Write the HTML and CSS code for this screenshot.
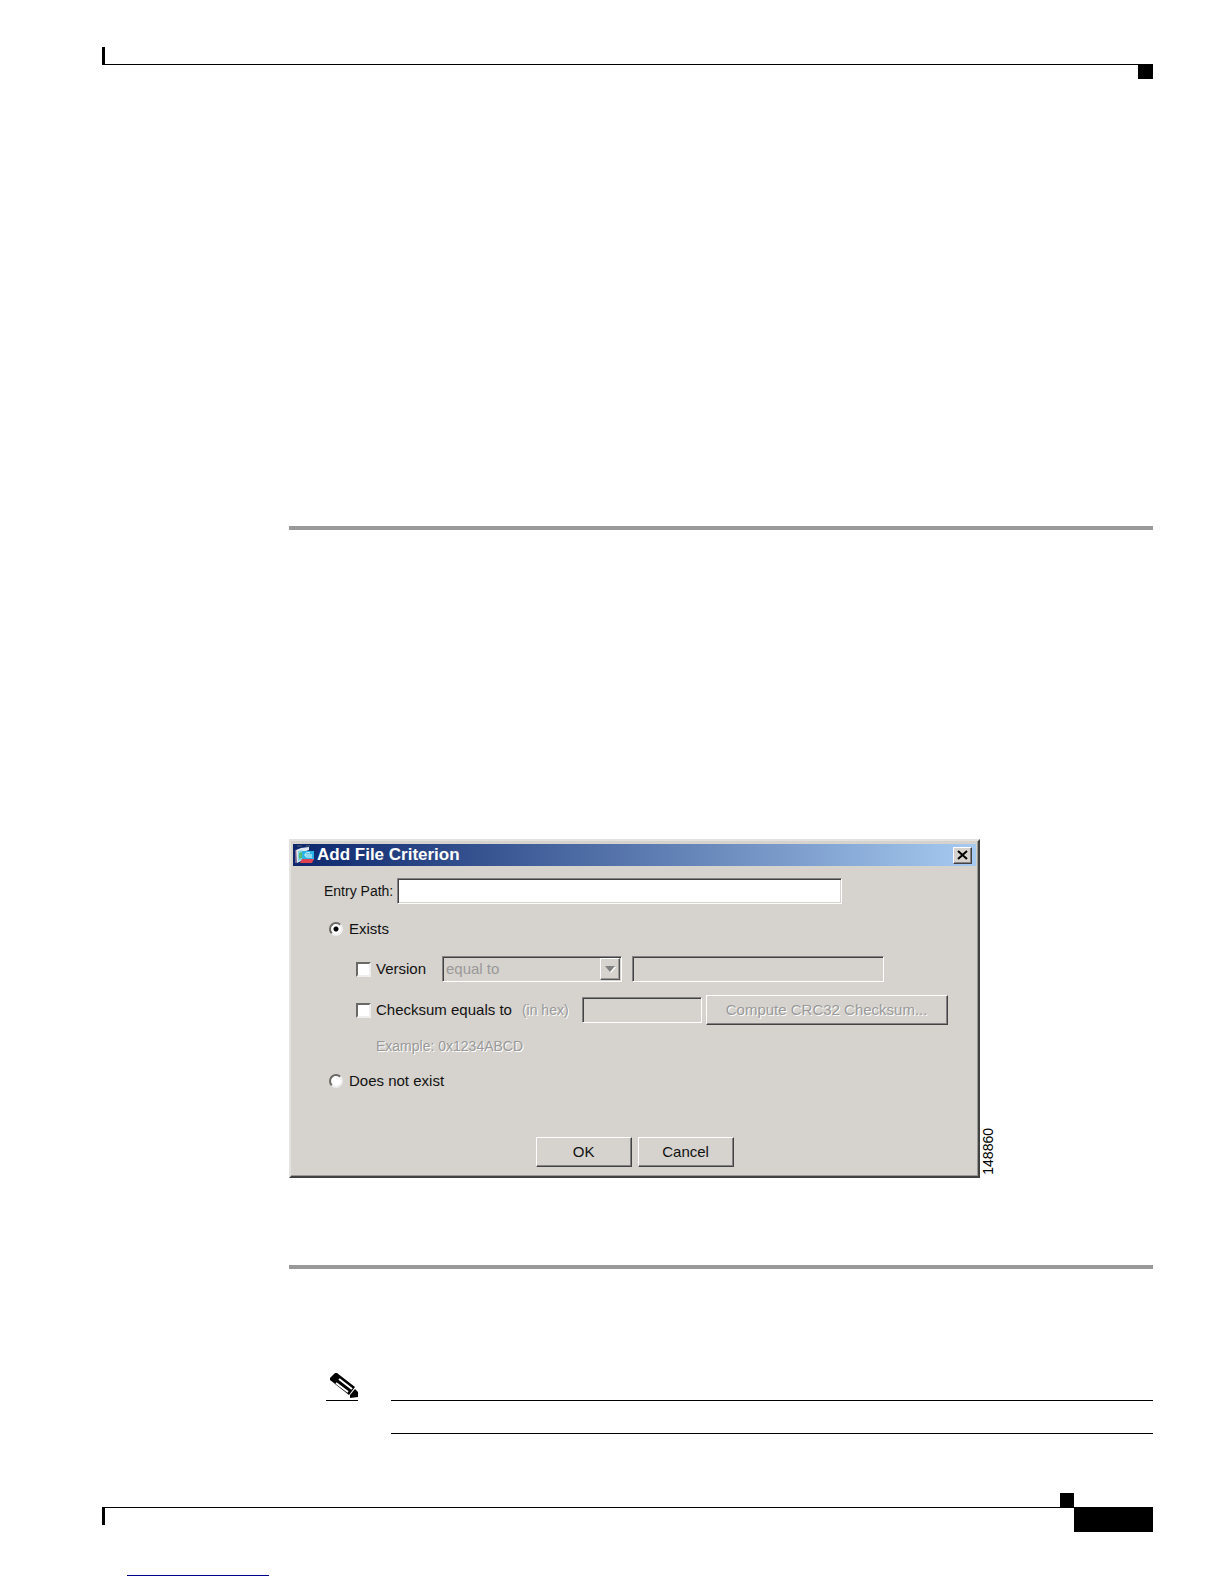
FILE: index.html
```
<!DOCTYPE html>
<html lang="en">
<head>
    <meta charset="UTF-8">
    <meta name="viewport" content="width=device-width, initial-scale=1.0">
    <title>Add File Criterion</title>
    <link rel="stylesheet" href="styles.css">
</head>
<body>
    <div class="page">
        <header class="page-header">
            <div class="header-line"></div>
            <div class="header-square"></div>
        </header>

        <main class="content">
            <hr class="rule">
            <div class="figure">
                <form class="dialog">
                    <div class="title-bar">
                        <svg class="title-icon" width="20" height="20" viewBox="0 0 20 20" aria-hidden="true">
                            <path d="M2 1h5M11 1h4" stroke="#59606e" stroke-width="1"/>
                            <path d="M1 5l5-2 8-1v3l-6 2v8l-6 3z" fill="#dfe6f0"/>
                            <path d="M3 6l4-1v10l-4 1z" fill="#7fd8e4"/>
                            <path d="M4 8l3-1v6l-3 1z" fill="#55b878"/>
                            <path d="M1 5v13" stroke="#d8a0b0" stroke-width="1"/>
                            <path d="M7 6h12v9H7z" fill="#28b4e4"/>
                            <path d="M15 8c-6-2-7 5-1 4h3M11 10h6" stroke="#f4fbff" stroke-width="1" fill="none"/>
                            <path d="M7 14h12l-2 4H5z" fill="#e04050"/>
                        </svg>
                        <h1 class="title">Add File Criterion</h1>
                        <button class="close-button" type="button" aria-label="Close">
                            <svg width="11" height="10" viewBox="0 0 11 10" aria-hidden="true">
                                <path d="M1 1l9 8M10 1L1 9" stroke="#000" stroke-width="2" fill="none"/>
                            </svg>
                        </button>
                    </div>

                    <div class="row entry-row">
                        <label class="small" for="entry-path">Entry Path:</label>
                        <input class="field entry-path" type="text" id="entry-path">
                    </div>

                    <div class="row exists-row">
                        <input class="radio" type="radio" name="criterion" id="exists" checked>
                        <label for="exists">Exists</label>
                    </div>

                    <div class="row sub-row version-row">
                        <input class="checkbox" type="checkbox" id="version">
                        <label class="version-label" for="version">Version</label>
                        <div class="select-box">
                            <select class="field operator" aria-label="Version comparison" disabled>
                                <option>equal to</option>
                            </select>
                            <span class="arrow">
                                <svg width="11" height="7" viewBox="0 0 11 7" aria-hidden="true">
                                    <path d="M2 1h9L6 7z" fill="#fff"/>
                                    <path d="M0 0h10L5 6z" fill="#808080"/>
                                </svg>
                            </span>
                        </div>
                        <input class="field version-value" type="text" aria-label="Version value" disabled>
                    </div>

                    <div class="row sub-row checksum-row">
                        <input class="checkbox" type="checkbox" id="checksum">
                        <label for="checksum">Checksum equals to</label>
                        <span class="hint hex">(in hex)</span>
                        <input class="field checksum-value" type="text" aria-label="Checksum value" disabled>
                        <button class="button compute-button" type="button" disabled>Compute CRC32 Checksum...</button>
                    </div>

                    <div class="row example-row">
                        <span class="hint">Example: 0x1234ABCD</span>
                    </div>

                    <div class="row missing-row">
                        <input class="radio" type="radio" name="criterion" id="missing">
                        <label for="missing">Does not exist</label>
                    </div>

                    <div class="buttons">
                        <button class="button" type="button">OK</button>
                        <button class="button" type="button">Cancel</button>
                    </div>
                </form>
                <span class="figure-number">148860</span>
            </div>
            <hr class="rule">

            <div class="note">
                <div class="note-icon">
                    <svg width="33" height="26" viewBox="0 0 33 26" aria-hidden="true">
                        <path d="M9 0L4 5v2l19 15 6-8L11 0z" fill="#000"/>
                        <path d="M13 6l13 10M10 10l12 9" stroke="#fff" stroke-width="2"/>
                        <path d="M29 16l3 3v5l-8 1v-3z" fill="#000"/>
                    </svg>
                </div>
                <div class="note-body"></div>
            </div>
        </main>

        <footer class="page-footer">
            <div class="footer-line"><div class="footer-square"></div></div>
            <div class="page-number"></div>
        </footer>
        <div class="link-line"></div>
    </div>
</body>
</html>
```
FILE: styles.css
```
* {
    box-sizing: border-box;
}
body {
    margin: 0;
    background-color: #fff;
    color: #111;
    font-family: "Liberation Sans", Arial, sans-serif;
    font-size: 15px;
    line-height: 20px;
}
.page {
    padding: 47px 71px 8px 102px;
}

/* page header and footer marks */
.page-header {
    display: flex;
    align-items: flex-start;
}
.header-line {
    flex: 1;
    height: 18px;
    border-left: 3px solid #000;
    border-bottom: 1px solid #000;
}
.header-square {
    width: 15px;
    height: 15px;
    margin-top: 17px;
    background-color: #000;
}
.page-footer {
    display: flex;
    align-items: flex-end;
    margin-top: 59px;
}
.footer-line {
    display: flex;
    flex: 1;
    justify-content: flex-end;
    height: 39px;
    background: linear-gradient(#000, #000) 0 14px / 3px 18px no-repeat,
        linear-gradient(#000, #000) 0 14px / 100% 1px no-repeat;
}
.footer-square {
    width: 14px;
    height: 14px;
    background-color: #000;
}
.page-number {
    width: 79px;
    height: 25px;
    background-color: #000;
}
.link-line {
    width: 142px;
    height: 1px;
    margin: 43px 0 0 25px;
    background-color: #00008b;
}

.content {
    margin-left: 187px;
    padding-top: 447px;
}
.rule {
    height: 4px;
    margin: 0;
    border: none;
    background-color: #999;
}
.figure {
    display: flex;
    align-items: flex-end;
    margin: 309px 0 87px;
}
.figure-number {
    margin-bottom: 3px;
    color: #000;
    font-size: 14px;
    line-height: 16px;
    writing-mode: vertical-rl;
    transform: rotate(180deg);
}

/* dialog window */
.dialog {
    flex: 0 0 80%;
    padding: 3px 2px 9px;
    background-color: #d6d3ce;
    border: 2px solid;
    border-color: #e4e2de #424242 #424242 #e4e2de;
    box-shadow: inset -1px -1px #999;
}
.title-bar {
    display: flex;
    align-items: center;
    height: 22px;
    padding: 0 4px 0 2px;
    background: linear-gradient(to right, #0c266c, #a6caf0);
}
.title {
    flex: 1;
    margin: 0 0 0 2px;
    color: #fff;
    font-size: 17px;
    line-height: 22px;
}
.close-button {
    display: flex;
    align-items: center;
    justify-content: center;
    width: 19px;
    height: 17px;
    padding: 0;
    background-color: #d6d3ce;
    border: 1px solid;
    border-color: #fff #424242 #424242 #fff;
    box-shadow: inset -1px -1px #848284;
}
.row {
    display: flex;
    align-items: center;
}
.small, .hint {
    font-size: 14px;
}
.hint {
    color: #999;
    text-shadow: 1px 1px #fff;
}
.entry-row {
    height: 26px;
    margin-top: 12px;
    padding-left: 31px;
}
.exists-row, .missing-row {
    height: 20px;
    margin-top: 15px;
    padding-left: 36px;
}
.sub-row {
    padding-left: 63px;
}
.version-row {
    height: 26px;
    margin-top: 17px;
}
.checksum-row {
    height: 30px;
    margin-top: 13px;
}
.example-row {
    height: 20px;
    margin-top: 11px;
    padding-left: 83px;
}

/* controls */
.field {
    height: 26px;
    margin: 0;
    padding: 0 3px;
    background-color: #fff;
    border: 1px solid;
    border-color: #848284 #fff #fff #848284;
    border-radius: 0;
    box-shadow: inset 1px 1px #424242, inset -1px -1px #d6d3ce;
    font: inherit;
}
.field:disabled {
    background-color: #d6d3ce;
    color: #999;
    opacity: 1;
}
.entry-path {
    width: 445px;
    margin-left: 4px;
}
.radio, .checkbox {
    flex: none;
    appearance: none;
    margin: 0;
    background-color: #fff;
    border: 2px solid;
    border-color: #6b6965 #eee #eee #6b6965;
}
.radio {
    width: 14px;
    height: 14px;
    margin-right: 6px;
    border-radius: 50%;
}
.radio:checked {
    background: radial-gradient(circle, #000 2px, #fff 3px);
}
.checkbox {
    width: 15px;
    height: 15px;
    margin-right: 5px;
}
.version-label {
    width: 66px;
}
.select-box {
    position: relative;
    width: 180px;
}
.operator {
    display: block;
    appearance: none;
    width: 100%;
}
.arrow {
    position: absolute;
    top: 2px;
    right: 2px;
    bottom: 2px;
    display: flex;
    align-items: center;
    justify-content: center;
    width: 20px;
    border: 1px solid;
    border-color: #fff #555 #555 #fff;
    box-shadow: inset -1px -1px #999;
    pointer-events: none;
}
.version-value {
    width: 252px;
    margin-left: 10px;
}
.hex {
    margin-left: 10px;
}
.checksum-value {
    width: 120px;
    margin-left: 13px;
}
.button {
    width: 96px;
    height: 30px;
    padding: 0;
    background-color: #d6d3ce;
    border: 1px solid;
    border-color: #fff #424242 #424242 #fff;
    box-shadow: inset -1px -1px #848284;
    color: #111;
    font: inherit;
}
.button:disabled {
    color: #999;
    text-shadow: 1px 1px #fff;
}
.compute-button {
    width: 242px;
    margin-left: 4px;
}
.buttons {
    display: flex;
    justify-content: center;
    gap: 6px;
    margin-top: 46px;
}

/* note block */
.note {
    display: flex;
    gap: 33px;
    margin-top: 104px;
    padding-left: 37px;
}
.note-icon {
    width: 32px;
    height: 28px;
    border-bottom: 1px solid #000;
}
.note-icon svg {
    display: block;
}
.note-body {
    flex: 1;
    height: 34px;
    margin-top: 27px;
    border-top: 1px solid #000;
    border-bottom: 1px solid #000;
}
```
